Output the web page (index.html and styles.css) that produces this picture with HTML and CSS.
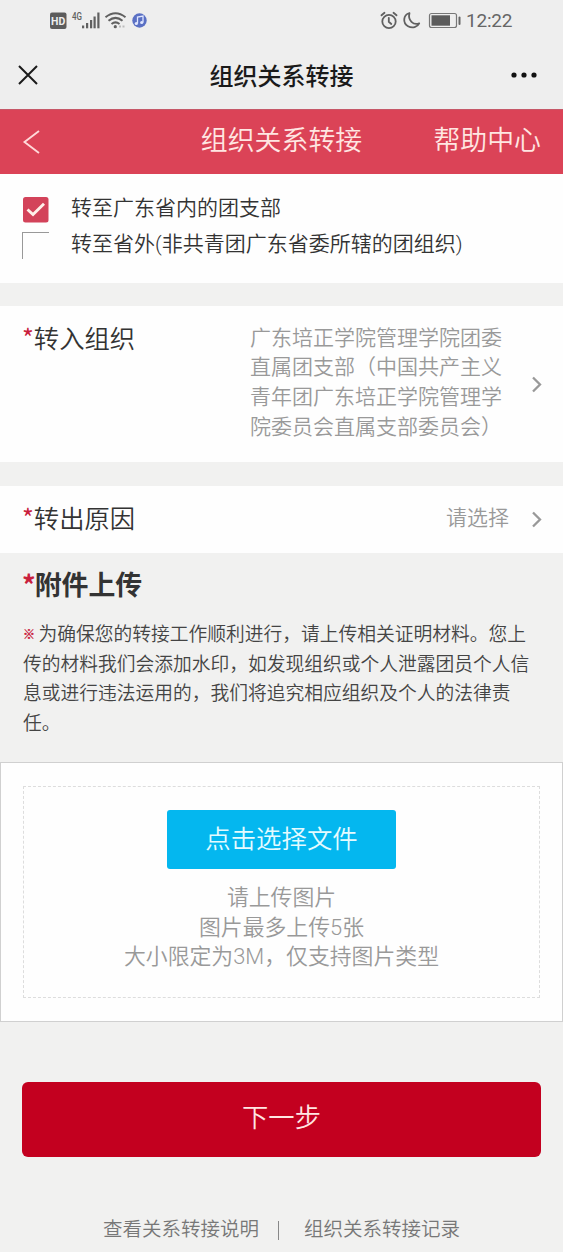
FILE: index.html
```html
<!DOCTYPE html>
<html lang="zh-CN">
<head>
<meta charset="utf-8">
<title>组织关系转接</title>
<link rel="stylesheet" href="styles.css">
</head>
<body>
<div class="status">
  <svg class="status-left" width="100" height="24" viewBox="0 0 100 24">
    <rect x="2" y="4.500" width="16.500" height="16.500" rx="2" fill="#5c5c5c"/>
    <text x="10.200" y="16.700" class="hd">HD</text>
    <text x="24" y="11.800" class="g4" textLength="10" lengthAdjust="spacingAndGlyphs">4G</text>
    <g fill="#606060">
      <rect x="34" y="17.500" width="2.200" height="2.800"/>
      <rect x="38" y="15" width="2.200" height="5.300"/>
      <rect x="42" y="12" width="2.200" height="8.300"/>
      <rect x="45.500" y="8.500" width="2.200" height="11.800"/>
      <rect x="49.300" y="4.500" width="2.200" height="15.800"/>
    </g>
    <g fill="none" stroke="#606060" stroke-width="2">
      <path d="M57.500 9.200Q67.500 1.200 77.500 9.200"/>
      <path d="M60.500 12.800Q67.500 7 74.500 12.800"/>
      <path d="M63.500 16Q67.500 12.800 71.500 16"/>
    </g>
    <circle cx="67.300" cy="18.700" r="1.600" fill="#606060"/>
    <path d="M71 18.500h2M74.500 18.500h2" stroke="#bbb" stroke-width="2"/>
    <circle cx="91.500" cy="12.500" r="7.200" fill="#5a70c4"/>
    <path d="M89.500 15.500V9l5.500-1v6.500" fill="none" stroke="#dfe6ff" stroke-width="1.300"/>
    <circle cx="88.300" cy="15.500" r="1.600" fill="#dfe6ff"/>
    <circle cx="93.700" cy="14.500" r="1.600" fill="#dfe6ff"/>
  </svg>
  <div class="status-right">
    <svg width="84" height="24" viewBox="0 0 84 24">
      <g fill="none" stroke="#606060" stroke-width="1.800" stroke-linecap="round">
        <circle cx="11" cy="13.500" r="6.700"/>
        <path d="M3.500 7.300L6.500 4.800M18.500 7.300L15.500 4.800M10.800 9.800V13.800L13.300 16"/>
        <path d="M31.500 5C25 7 24.500 15 30 18.200C34.500 20.700 39.500 19 41.200 15.300C35.500 17.500 29.500 12.500 31.500 5Z" stroke-linejoin="round"/>
      </g>
      <rect x="51.500" y="5.500" width="27" height="14" rx="2" fill="none" stroke="#777" stroke-width="1.200"/>
      <rect x="53.500" y="7.300" width="18.500" height="10.400" fill="#5c5c5c"/>
      <rect x="80.500" y="8.500" width="2" height="8.500" rx="1" fill="#666"/>
    </svg>
    <span class="clock">12:22</span>
  </div>
</div>
<header class="nav">
  <svg width="20" height="20" viewBox="0 0 20 20"><path d="M1 1L19 19M19 1L1 19" stroke="#1a1a1a" stroke-width="2"/></svg>
  <h1>组织关系转接</h1>
  <svg width="26" height="6" viewBox="0 0 26 6" fill="#111"><circle cx="3" cy="3" r="2.600"/><circle cx="13" cy="3" r="2.600"/><circle cx="23" cy="3" r="2.600"/></svg>
</header>
<div class="bar">
  <svg width="18" height="26" viewBox="0 0 18 26"><path d="M17 2L2.500 13L17 24" fill="none" stroke="#ffd9d9" stroke-width="1.900"/></svg>
  <h2>组织关系转接</h2>
  <a>帮助中心</a>
</div>
<section class="choices">
  <label class="choice">
    <svg class="box" width="27" height="27" viewBox="0 0 27 27"><rect x="1" y="1" width="25.500" height="25.500" rx="2.500" fill="#d3435a"/><path d="M5.500 13.500L11 18.500L22 7.800" fill="none" stroke="#fff0ea" stroke-width="2.900"/></svg>
    <span>转至广东省内的团支部</span>
  </label>
  <label class="choice">
    <i class="box empty"></i>
    <span>转至省外(非共青团广东省委所辖的团组织)</span>
  </label>
</section>
<section class="row target">
  <div class="label"><b>*</b>转入组织</div>
  <div class="value">广东培正学院管理学院团委<br>直属团支部（中国共产主义<br>青年团广东培正学院管理学<br>院委员会直属支部委员会）</div>
  <svg class="chev" width="12" height="17" viewBox="0 0 12 17"><path d="M2 1.500L9 8.500L2 15.500" fill="none" stroke="#999" stroke-width="2.300"/></svg>
</section>
<section class="row reason">
  <div class="label"><b>*</b>转出原因</div>
  <div class="value pick">请选择</div>
  <svg class="chev" width="12" height="17" viewBox="0 0 12 17"><path d="M2 1.500L9 8.500L2 15.500" fill="none" stroke="#999" stroke-width="2.300"/></svg>
</section>
<section class="attach">
  <h3><b>*</b>附件上传</h3>
  <p><b>※</b> 为确保您的转接工作顺利进行，请上传相关证明材料。您上<br>传的材料我们会添加水印，如发现组织或个人泄露团员个人信<br>息或进行违法运用的，我们将追究相应组织及个人的法律责<br>任。</p>
</section>
<section class="card">
  <div class="drop">
    <button class="choose">点击选择文件</button>
    <div class="hint">请上传图片<br>图片最多上传5张<br>大小限定为3M，仅支持图片类型</div>
  </div>
</section>
<button class="next">下一步</button>
<footer class="links"><a>查看关系转接说明</a><i></i><a>组织关系转接记录</a></footer>
</body>
</html>
```
FILE: styles.css
```css
* { box-sizing: border-box; margin: 0; padding: 0; }
body {
  width: 563px;
  height: 1252px;
  overflow: hidden;
  background: #f1f1f0;
  color: #333;
  font-family: Roboto, "Noto Sans CJK SC", sans-serif;
  font-weight: 350;
}
svg { display: block; flex: none; }
.status { height: 42px; padding: 8px 50px 0 48px; display: flex; justify-content: space-between; background: #eee; }
.status-right { display: flex; gap: 4px; }
.hd { font: 700 10.500px Roboto, sans-serif; fill: #eee; text-anchor: middle; }
.g4 { font: 500 10px Roboto, sans-serif; fill: #606060; }
.clock { font-size: 19px; line-height: 26px; color: #666; font-weight: 400; width: 47px; white-space: nowrap; letter-spacing: -0.200px; }
.nav { height: 67px; padding: 0 26px 0 18px; display: grid; grid-template-columns: 60px 1fr 52px; align-items: center; background: #eee; }
.nav svg { margin-bottom: 2px; }
.nav svg:last-child { justify-self: end; }
.nav h1 { font-size: 24px; line-height: 32px; font-weight: 500; color: #1a1a1a; text-align: center; padding-top: 2px; }
.bar { height: 65px; padding: 0 22px; display: grid; grid-template-columns: 120px 1fr 120px; align-items: center; background: #db4357; color: #ffe6e2; border-top: 1px solid #c65868; }
.bar h2, .bar a { font-size: 26.900px; line-height: 32px; font-weight: 350; text-align: center; white-space: nowrap; padding-bottom: 2px; }
.bar a { text-align: right; }
.choices { height: 109px; padding: 16px 22px 0; background: #fefefe; }
.choice { display: flex; height: 36px; gap: 22px; font-size: 21px; line-height: 36px; white-space: nowrap; }
.box { margin-top: 6px; width: 27px; height: 27px; }
.empty { border-top: 1px solid #999; border-left: 1px solid #999; }
.row { display: flex; align-items: center; background: #fefefe; padding: 0 20px 0 22px; }
.target { margin-top: 23px; height: 156px; }
.reason { margin-top: 24px; height: 67px; }
.label { width: 228px; font-size: 25.300px; line-height: 36px; white-space: nowrap; }
.label b, .attach h3 b { font-family: "Noto Sans CJK SC", sans-serif; line-height: 1; color: #c9203c; }
.label b { font-weight: 400; }
.target .label { align-self: flex-start; margin-top: 16px; }
.value { flex: 1; font-size: 21px; line-height: 29.700px; color: #999; white-space: nowrap; padding: 0 22px 2px 0; }
.pick { text-align: right; }
.attach { height: 209px; padding: 16px 22px 0; }
.attach h3 { font-size: 26.900px; line-height: 34px; font-weight: 700; }
.attach h3 b { font-weight: 700; margin-right: -1px; }
.attach p { margin-top: 18px; padding-left: 1px; font-size: 18.750px; line-height: 29.700px; white-space: nowrap; color: #444; }
.attach p b { display: inline-block; width: 11px; font-size: 12px; line-height: 12px; vertical-align: 2px; font-weight: 700; color: #c9203c; -webkit-text-stroke: 0.400px #c9203c; }
.card { height: 260px; padding: 23px 22px; background: #fefefe; border: 1px solid #d0d0d0; }
.drop { height: 212px; border: 1px dashed #ddd; padding-top: 23px; display: flex; flex-direction: column; align-items: center; }
.choose { width: 229px; height: 59px; border: 0; border-radius: 3px; background: #04b7ef; color: #e4fbff; font: 350 25.400px/57px Roboto, "Noto Sans CJK SC", sans-serif; }
.hint { margin-top: 14px; font-size: 21.850px; line-height: 29.700px; color: #999; text-align: center; }
.next { display: block; width: 519px; height: 75px; margin: 60px 0 0 22px; padding-bottom: 3px; border: 0; border-radius: 6px; background: #c3001f; color: #ffe6e2; font: 350 26.300px/70px Roboto, "Noto Sans CJK SC", sans-serif; }
.links { margin-top: 59px; height: 28px; display: flex; align-items: center; justify-content: center; font-size: 19.500px; line-height: 28px; color: #777; }
.links i { width: 1px; height: 19px; margin: 1px 25px 0 19px; background: #888; }
```
